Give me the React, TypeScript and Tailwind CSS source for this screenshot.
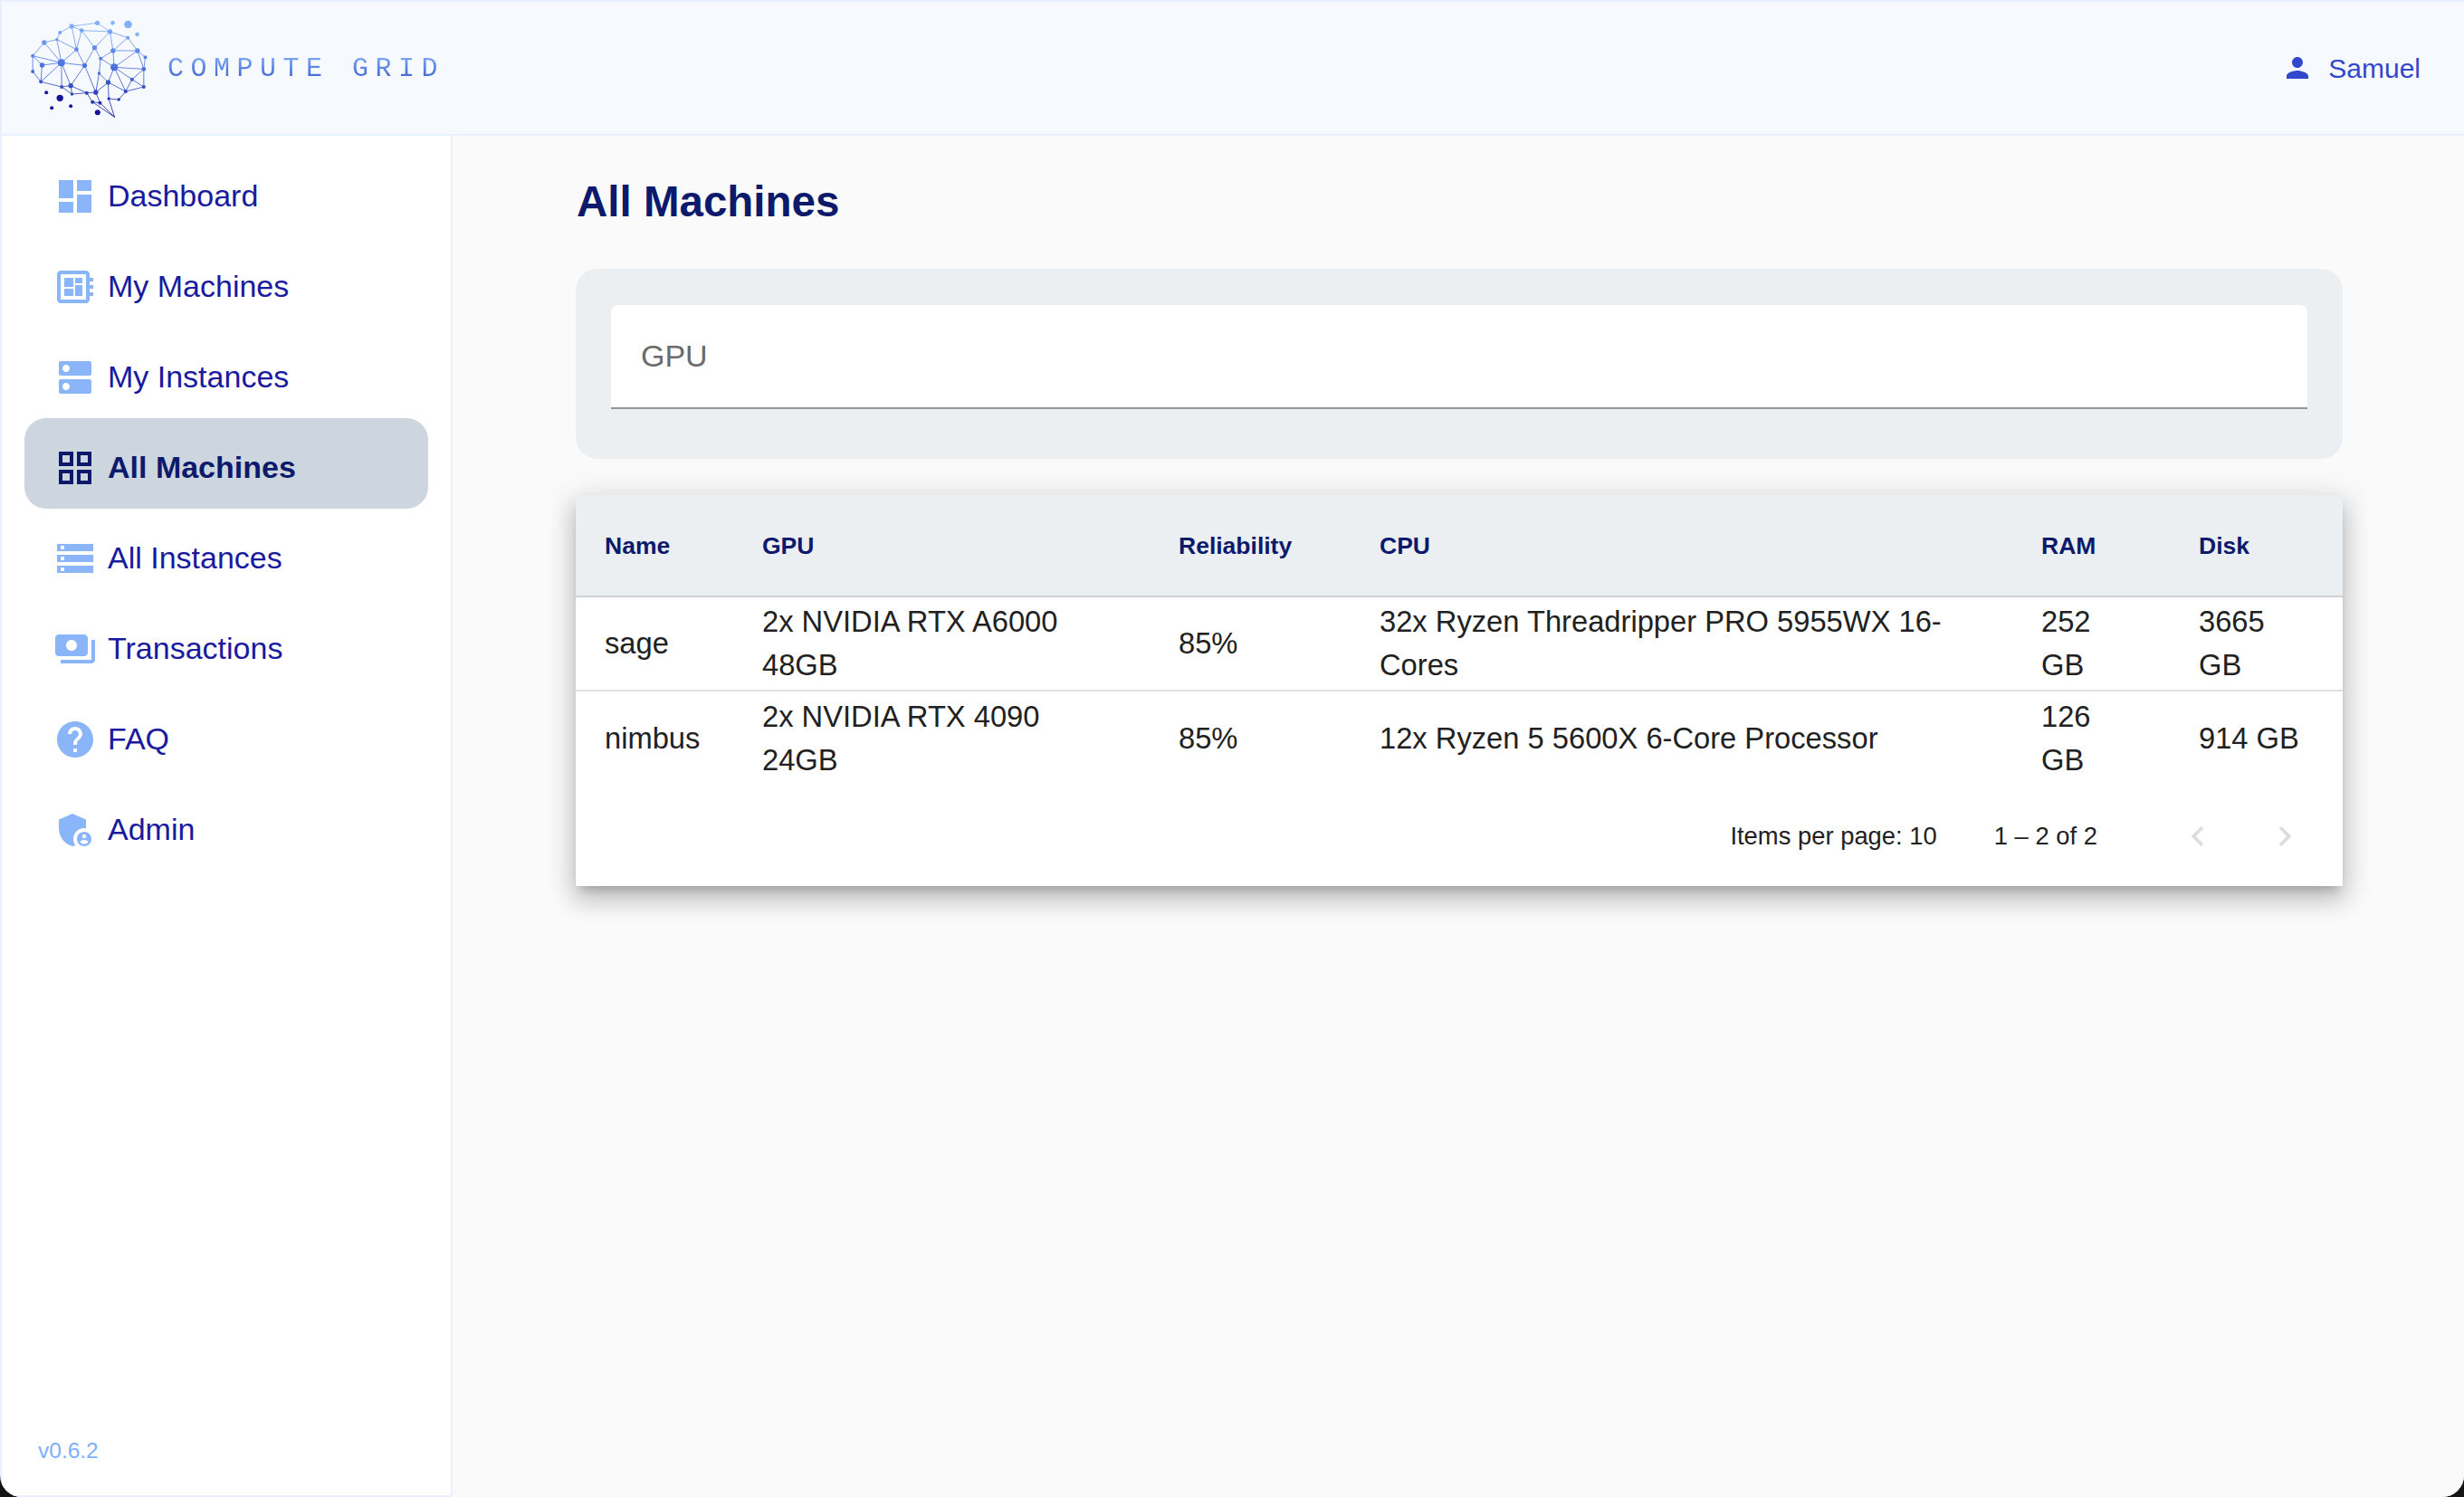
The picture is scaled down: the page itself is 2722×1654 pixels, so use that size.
const navIcons: Record<string, React.ReactNode> = {
  Dashboard: <path d="M3 13h8V3H3v10zm0 8h8v-6H3v6zm10 0h8V11h-8v10zm0-18v6h8V3h-8z" />,
  "My Machines": (
    <path d="M22 9V7h-2V5c0-1.1-.9-2-2-2H4c-1.1 0-2 .9-2 2v14c0 1.1.9 2 2 2h14c1.1 0 2-.9 2-2v-2h2v-2h-2v-2h2v-2h-2V9h2zm-4 10H4V5h14v14zM6 13h5v4H6zm6-6h4v3h-4zM6 7h5v5H6zm6 4h4v6h-4z" />
  ),
  "My Instances": (
    <path d="M20 13H4c-.55 0-1 .45-1 1v6c0 .55.45 1 1 1h16c.55 0 1-.45 1-1v-6c0-.55-.45-1-1-1zM7 19c-1.1 0-2-.9-2-2s.9-2 2-2 2 .9 2 2-.9 2-2 2zM20 3H4c-.55 0-1 .45-1 1v6c0 .55.45 1 1 1h16c.55 0 1-.45 1-1V4c0-.55-.45-1-1-1zM7 9c-1.1 0-2-.9-2-2s.9-2 2-2 2 .9 2 2-.9 2-2 2z" />
  ),
  "All Machines": (
    <path d="M3 3v8h8V3H3zm6 6H5V5h4v4zm-6 4v8h8v-8H3zm6 6H5v-4h4v4zm4-16v8h8V3h-8zm6 6h-4V5h4v4zm-6 4v8h8v-8h-8zm6 6h-4v-4h4v4z" />
  ),
  "All Instances": (
    <path d="M2 20h20v-4H2v4zm2-3h2v2H4v-2zM2 4v4h20V4H2zm4 3H4V5h2v2zm-4 7h20v-4H2v4zm2-3h2v2H4v-2z" />
  ),
  Transactions: (
    <path d="M19 14V6c0-1.1-.9-2-2-2H3c-1.1 0-2 .9-2 2v8c0 1.1.9 2 2 2h14c1.1 0 2-.9 2-2zm-9-1c-1.66 0-3-1.34-3-3s1.34-3 3-3 3 1.34 3 3-1.34 3-3 3zm13-6v11c0 1.1-.9 2-2 2H4v-2h17V7h2z" />
  ),
  FAQ: (
    <path d="M12 2C6.48 2 2 6.48 2 12s4.48 10 10 10 10-4.48 10-10S17.52 2 12 2zm1 17h-2v-2h2v2zm2.07-7.75l-.9.92C13.45 12.9 13 13.5 13 15h-2v-.5c0-1.1.45-2.1 1.17-2.83l1.24-1.26c.37-.36.59-.86.59-1.41 0-1.1-.9-2-2-2s-2 .9-2 2H8c0-2.21 1.79-4 4-4s4 1.79 4 4c0 .88-.36 1.68-.93 2.25z" />
  ),
  Admin: (
    <>
      <path d="M17 11c.34 0 .67.04 1 .09V6.27L10.5 3 3 6.27v4.91c0 4.54 3.2 8.79 7.5 9.82.55-.13 1.08-.32 1.6-.55C11.41 19.47 11 18.28 11 17c0-3.31 2.69-6 6-6z" />
      <path d="M17 13c-2.21 0-4 1.79-4 4s1.79 4 4 4 4-1.79 4-4-1.79-4-4-4zm0 1.38c.62 0 1.12.51 1.12 1.12s-.51 1.12-1.12 1.12-1.12-.51-1.12-1.12.5-1.12 1.12-1.12zm0 5.37c-.93 0-1.74-.46-2.24-1.17.05-.72 1.51-1.08 2.24-1.08s2.19.36 2.24 1.08c-.5.71-1.31 1.17-2.24 1.17z" />
    </>
  ),
};

const navItems = Object.keys(navIcons);

const rows = [
  {
    name: "sage",
    gpu: "2x NVIDIA RTX A6000 48GB",
    reliability: "85%",
    cpu: "32x Ryzen Threadripper PRO 5955WX 16-Cores",
    ram: "252 GB",
    disk: "3665 GB",
  },
  {
    name: "nimbus",
    gpu: "2x NVIDIA RTX 4090 24GB",
    reliability: "85%",
    cpu: "12x Ryzen 5 5600X 6-Core Processor",
    ram: "126 GB",
    disk: "914 GB",
  },
];

// brain logo, coordinates taken off the reference at 3x
const pts: Record<string, [number, number, number]> = {
  a: [237, 83, 8], b: [322, 72, 8], c: [270, 97, 7], d: [364, 101, 8], e: [198, 104, 6],
  f: [188, 127, 5], g: [146, 137, 8], h: [423, 121, 6], i: [455, 164, 8], j: [374, 164, 8],
  k: [313, 154, 8], l: [253, 160, 7], m: [481, 186, 6], n: [108, 181, 6], o: [203, 204, 12],
  p: [139, 212, 8], q: [280, 213, 8], r: [333, 190, 6], s: [378, 219, 12], t: [476, 225, 7],
  u: [108, 233, 6], v: [328, 239, 5], w: [437, 259, 6], x: [135, 267, 6], y: [358, 269, 8],
  z: [204, 284, 6], A: [234, 280, 8], B: [476, 284, 6], C: [416, 299, 6], D: [317, 302, 8],
  E: [287, 304, 6], F: [238, 308, 5], G: [306, 334, 6], H: [331, 337, 6], I: [360, 323, 5],
  J: [393, 326, 5], T: [379, 384, 1],
};

const edges =
  "ae ac ab cd cl ck dk db dh dj ef fg fl fo gn go al nu np no px po ux xo xz oz oA oq ol lq qk qA qD kr rj rv rs jh ji js hi im it is st sw sC sy vD vy wt wC wB tB CB yC yD yI zF zA AE AF ED FE EG GH HD IJ JC GT HT IT mt".split(
    " ",
  );

const freeDots: [number, number, number, string][] = [
  [373, 72, 7, "#8ab6f9"],
  [424, 77, 13, "#82b1fa"],
  [454, 110, 7, "#8ab6f9"],
  [153, 303, 6, "#14149a"],
  [198, 321, 11, "#14149a"],
  [171, 354, 6, "#14149a"],
  [234, 348, 6, "#14149a"],
  [323, 369, 9, "#14149a"],
];

function BrainLogo() {
  return (
    <svg width="137" height="115" viewBox="90 50 410 345">
      <defs>
        <linearGradient id="brain" gradientUnits="userSpaceOnUse" x1="0" y1="60" x2="0" y2="384">
          <stop offset="0" stopColor="#8ab6f9" />
          <stop offset="0.5" stopColor="#4a6fdc" />
          <stop offset="1" stopColor="#14149a" />
        </linearGradient>
      </defs>
      {edges.map((e) => {
        const p1 = pts[e[0]];
        const p2 = pts[e[1]];
        return (
          <line key={e} x1={p1[0]} y1={p1[1]} x2={p2[0]} y2={p2[1]} stroke="url(#brain)" strokeWidth="2.5" />
        );
      })}
      {Object.entries(pts).map(([k, p]) => (
        <circle key={k} cx={p[0]} cy={p[1]} r={p[2]} fill="url(#brain)" />
      ))}
      {freeDots.map((d) => (
        <circle key={d[0]} cx={d[0]} cy={d[1]} r={d[2]} fill={d[3]} />
      ))}
    </svg>
  );
}

export default function App() {
  return (
    <div className="bg-[#141414]">
      <div className="relative flex h-[1654px] flex-col overflow-hidden rounded-b-[24px] bg-[#e8f1fd] pt-[2px] pl-[2px] font-['Liberation_Sans',sans-serif]">
        <header className="flex h-[148px] shrink-0 items-center justify-between border-b-2 border-[#e8f1fd] bg-[#f6faff] pr-[48px] pl-[28px]">
          <div className="flex items-center">
            <BrainLogo />
            <span className="mt-[3px] ml-[18px] bg-gradient-to-b from-[#8ab6f9] to-[#2f45c4] bg-clip-text pt-[2px] pb-[4px] font-['Liberation_Mono',monospace] text-[30px] leading-[34px] tracking-[7.5px] text-transparent">
              COMPUTE GRID
            </span>
          </div>
          <div className="flex items-center gap-[16px] text-[30px] text-[#3347cc]">
            <svg width="36" height="36" viewBox="0 0 24 24" fill="currentColor">
              <path d="M12 12c2.21 0 4-1.79 4-4s-1.79-4-4-4-4 1.79-4 4 1.79 4 4 4zm0 2c-2.67 0-8 1.34-8 4v2h16v-2c0-2.66-5.33-4-8-4z" />
            </svg>
            Samuel
          </div>
        </header>

        <div className="flex min-h-0 flex-1">
          <aside className="flex w-[498px] shrink-0 flex-col justify-between border-r-2 border-b-2 border-[#e8f1fd] bg-white pt-[12px] pb-[30px]">
            <nav className="flex flex-col pr-[25px] pl-[25px]">
              {navItems.map((item) => {
                const active = item === "All Machines";
                return (
                  <div
                    key={item}
                    className={
                      active
                        ? "flex h-[100px] items-center gap-[12px] rounded-[24px] bg-[#cdd5df] pt-[9px] pl-[32px] text-[34px] font-bold text-[#0d1a6b]"
                        : "flex h-[100px] items-center gap-[12px] rounded-[24px] pt-[9px] pl-[32px] text-[34px] text-[#1a1a9e]"
                    }
                  >
                    <svg
                      width="48"
                      height="48"
                      viewBox="0 0 24 24"
                      fill="currentColor"
                      className={active ? "text-[#0d1a6b]" : "text-[#8ab6f9]"}
                    >
                      {navIcons[item]}
                    </svg>
                    {item}
                  </div>
                );
              })}
            </nav>
            <div className="pl-[40px] text-[24.5px] text-[#7fb0fa]">v0.6.2</div>
          </aside>

          <main className="flex-1 bg-[#fafafa] pt-[42px] pr-[134px] pl-[136px]">
            <h1 className="pt-[1px] pl-[1px] text-[47.5px] leading-[59px] font-bold text-[#0d1a6b]">All Machines</h1>
            <div className="mt-[45px] rounded-[24px] bg-[#eceff2] px-[39px] pt-[40px] pb-[55px]">
              <div className="flex h-[115px] items-center rounded-t-[8px] border-b-2 border-[#949494] bg-white pl-[33px] text-[34px] text-[#6b6b6b]">
                GPU
              </div>
            </div>

            <div className="mt-[40px] bg-white shadow-[0_8px_10px_-5px_rgba(0,0,0,0.2),0_16px_24px_2px_rgba(0,0,0,0.14),0_6px_30px_5px_rgba(0,0,0,0.12)]">
              <table className="w-full table-fixed border-collapse text-left text-[32.7px] leading-[48px] text-[#212121]">
                <colgroup>
                  <col className="w-[174px]" />
                  <col className="w-[460px]" />
                  <col className="w-[222px]" />
                  <col className="w-[731px]" />
                  <col className="w-[174px]" />
                  <col />
                </colgroup>
                <thead>
                  <tr className="h-[112px] border-b-2 border-[#cfd3d8] bg-[#eceff2] text-[26.5px] font-bold text-[#0d1a6b]">
                    {["Name", "GPU", "Reliability", "CPU", "RAM", "Disk"].map((h) => (
                      <th key={h} className="px-[32px] font-bold">
                        {h}
                      </th>
                    ))}
                  </tr>
                </thead>
                <tbody>
                  {rows.map((r, i) => (
                    <tr key={r.name} className={i === 0 ? "h-[104px] border-b-2 border-[#e0e0e0]" : "h-[104px]"}>
                      <td className="px-[32px]">{r.name}</td>
                      <td className="px-[32px]">{r.gpu}</td>
                      <td className="px-[32px]">{r.reliability}</td>
                      <td className="px-[32px]">{r.cpu}</td>
                      <td className="px-[32px]">{r.ram}</td>
                      <td className="px-[32px]">{r.disk}</td>
                    </tr>
                  ))}
                </tbody>
              </table>
              <div className="flex h-[112px] items-center justify-end pt-[2px] pr-[42px] text-[27.4px] text-[#212121]">
                <span>Items per page: 10</span>
                <span className="ml-[63px]">1 – 2 of 2</span>
                <svg width="44" height="44" viewBox="0 0 24 24" fill="#dcdcdc" className="ml-[89px]">
                  <path d="M15.41 7.41 14 6l-6 6 6 6 1.41-1.41L10.83 12z" />
                </svg>
                <svg width="44" height="44" viewBox="0 0 24 24" fill="#dcdcdc" className="ml-[52px]">
                  <path d="M10 6 8.59 7.41 13.17 12l-4.58 4.59L10 18l6-6z" />
                </svg>
              </div>
            </div>
          </main>
        </div>
      </div>
    </div>
  );
}
